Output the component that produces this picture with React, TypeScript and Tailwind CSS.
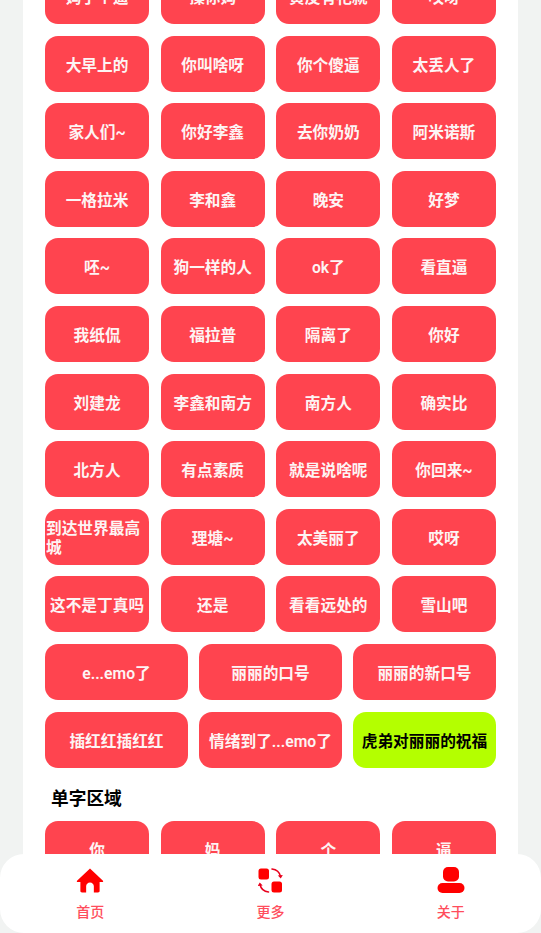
const font = "font-['Roboto','Noto_Sans_CJK_SC',sans-serif]"

const rows4 = [
  ["妈了个逼", "操你妈", "黄皮有祀就", "哎呀"],
  ["大早上的", "你叫啥呀", "你个傻逼", "太丢人了"],
  ["家人们~", "你好李鑫", "去你奶奶", "阿米诺斯"],
  ["一格拉米", "李和鑫", "晚安", "好梦"],
  ["呸~", "狗一样的人", "ok了", "看直逼"],
  ["我纸侃", "福拉普", "隔离了", "你好"],
  ["刘建龙", "李鑫和南方", "南方人", "确实比"],
  ["北方人", "有点素质", "就是说啥呢", "你回来~"],
  ["到达世界最高城", "理塘~", "太美丽了", "哎呀"],
  ["这不是丁真吗", "还是", "看看远处的", "雪山吧"],
]

const rows3 = [
  ["e...emo了", "丽丽的口号", "丽丽的新口号"],
  ["插红红插红红", "情绪到了...emo了", "虎弟对丽丽的祝福"],
]

const singles = ["你", "妈", "个", "逼"]

function Btn({ text, green }: { text: string; green?: boolean }) {
  return (
    <button
      className={`flex h-14 items-center justify-center rounded-[13px] px-px pt-[3px] text-left text-[15.7px] font-semibold leading-[19px] ${
        green ? "bg-[#b4ff00] text-black" : "bg-[#ff444f] text-[#fdf4f4]"
      }`}
    >
      {text}
    </button>
  )
}

export default function App() {
  return (
    <div className={`relative h-[933px] overflow-hidden bg-[#f1f3f2] ${font}`}>
      {/* scrolled content */}
      <div className="mx-[23px] -mt-8 bg-white px-[22px] pb-10">
        <div className="flex flex-col gap-[11.6px]">
          {rows4.map((row, i) => (
            <div key={i} className="grid grid-cols-4 gap-[11.5px]">
              {row.map((t, j) => (
                <Btn key={j} text={t} />
              ))}
            </div>
          ))}
          {rows3.map((row, i) => (
            <div key={i} className="grid grid-cols-3 gap-[11px]">
              {row.map((t, j) => (
                <Btn key={j} text={t} green={t === "虎弟对丽丽的祝福"} />
              ))}
            </div>
          ))}
        </div>

        <h2 className="mt-[18px] pl-[6px] text-[17.7px] leading-[26px] font-bold text-black">单字区域</h2>

        <div className="mt-[9px] grid grid-cols-4 gap-[11.5px]">
          {singles.map((t) => (
            <Btn key={t} text={t} />
          ))}
        </div>
      </div>

      {/* bottom nav */}
      <div className="absolute right-0 bottom-0 left-0 flex h-[79px] rounded-[24px] bg-white">
        <div className="flex flex-1 flex-col items-center pt-[14px]">
          <svg width="28" height="25" viewBox="0 0 28 26" fill="#ff0000">
            <path d="M14 0.5 27.5 13.2c.5.6.2 1.300-.6 1.300H24v9.500c0 1-.8 1.500-1.600 1.500H18v-6.500c0-2.200-1.700-4-4-4s-4 1.800-4 4V25.500H5.600C4.800 25.500 4 25 4 24V14.500H1.100c-.8 0-1.100-.7-.6-1.300Z" />
          </svg>
          <span className="mt-[9px] text-sm leading-5 font-medium text-[#ff4d5c]">首页</span>
        </div>
        <div className="flex flex-1 flex-col items-center pt-[14px]">
          <svg width="25" height="25" viewBox="0 0 25 25" fill="#ff0000">
            <rect x="0.500" y="0.500" width="10.500" height="11" rx="2.500" />
            <rect x="13.500" y="13.500" width="10.500" height="11" rx="2.500" />
            <path d="M14 1c4.200.4 7.500 3 8.500 7.500" fill="none" stroke="#e8001c" strokeWidth="1.600" strokeLinecap="round" />
            <path d="M19.800 7.500 22.800 10.500 24.800 7Z" fill="#e8001c" />
            <path d="M10.500 24c-4.200-.4-7.500-3-8.500-7.500" fill="none" stroke="#e8001c" strokeWidth="1.600" strokeLinecap="round" />
            <path d="M4.700 17.500 1.700 14.500 -.3 18Z" fill="#e8001c" />
          </svg>
          <span className="mt-[9px] text-sm leading-5 font-medium text-[#ff4d5c]">更多</span>
        </div>
        <div className="flex flex-1 flex-col items-center pt-[13px]">
          <svg width="28" height="26" viewBox="0 0 28 26" fill="#ff0000">
            <rect x="6" y="0" width="16" height="14.500" rx="5" />
            <rect x="0.500" y="16" width="27" height="10" rx="5" />
          </svg>
          <span className="mt-[9px] text-sm leading-5 font-medium text-[#ff4d5c]">关于</span>
        </div>
      </div>
    </div>
  )
}
